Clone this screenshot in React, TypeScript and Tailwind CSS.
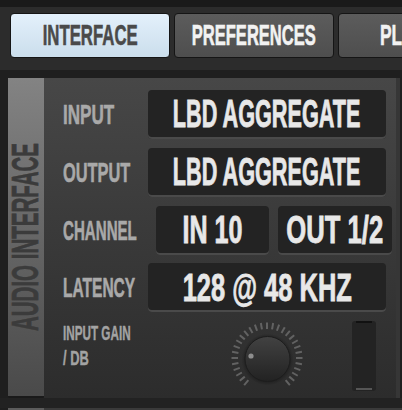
import React from "react";

function Tab({ label, active, scale }: { label: string; active?: boolean; scale: string }) {
  return (
    <div
      className={
        "h-[45px] w-[160px] shrink-0 rounded-[4px] border border-[#151515] flex items-center justify-center " +
        (active
          ? "bg-gradient-to-b from-[#e3f0fb] to-[#cbdeec] text-[#4a4a4a]"
          : "bg-gradient-to-b from-[#5c5c5c] to-[#4e4e4e] text-[#f2f2f2]")
      }
    >
      <span className={"inline-block whitespace-nowrap text-[29px] leading-none [-webkit-text-stroke:0.6px_currentColor] " + scale}>{label}</span>
    </div>
  );
}

function Label({ text, scale }: { text: string; scale: string }) {
  return (
    <div className="w-[85px] shrink-0 flex items-center">
      <span className={"inline-block whitespace-nowrap text-[28.5px] leading-none text-[#a9a9a9] origin-left [-webkit-text-stroke:0.6px_currentColor] " + scale}>
        {text}
      </span>
    </div>
  );
}

function Value({ text, w, scale, extra }: { text: string; w: string; scale: string; extra?: string }) {
  return (
    <div
      className={
        "h-full shrink-0 rounded-[4px] bg-[#232323] shadow-[inset_0_-2px_0_#4a4a4a] flex items-center justify-center " +
        w +
        " " +
        (extra || "")
      }
    >
      <span className={"inline-block whitespace-nowrap text-[38px] leading-none text-[#e8e8e8] [-webkit-text-stroke:0.8px_currentColor] " + scale}>{text}</span>
    </div>
  );
}

function Knob() {
  const ticks = [];
  for (let a = -140; a <= 140; a += 10) {
    const r = (a * Math.PI) / 180;
    const sx = Math.sin(r);
    const sy = -Math.cos(r);
    ticks.push(
      <line
        key={a}
        x1={40 + sx * 29}
        y1={40 + sy * 29}
        x2={40 + sx * 35.5}
        y2={40 + sy * 35.5}
        stroke="#626262"
        strokeWidth={2}
      />
    );
  }
  return (
    <svg width="80" height="80" viewBox="0 0 80 80" className="shrink-0 ml-[79px] mt-[6px]">
      <defs>
        <linearGradient id="kb" x1="0" y1="0" x2="0" y2="1">
          <stop offset="0" stopColor="#424242" />
          <stop offset="1" stopColor="#222222" />
        </linearGradient>
        <radialGradient id="ks" cx="0.5" cy="0.5" r="0.5">
          <stop offset="0.8" stopColor="#000" stopOpacity="0.35" />
          <stop offset="1" stopColor="#000" stopOpacity="0" />
        </radialGradient>
      </defs>
      {ticks}
      <circle cx="40.5" cy="41.5" r="26" fill="url(#ks)" />
      <circle cx="40.5" cy="41" r="22.5" fill="url(#kb)" stroke="#1d1d1d" strokeWidth="1" />
      <circle cx="24" cy="38" r="2.6" fill="#8e8e8e" />
    </svg>
  );
}

export default function App() {
  return (
    <div className="w-[402px] h-[410px] overflow-hidden bg-[#1f1f1f] font-['Liberation_Sans',Arial,sans-serif] font-bold flex flex-col">
      <div className="h-[7px] shrink-0 bg-[#1a1a1a]" />
      <div className="h-[63px] shrink-0 bg-[#2c2c2c] flex gap-[4px] pl-[10px] pt-[6px]">
        <Tab label="INTERFACE" active scale="scale-x-[0.578]" />
        <Tab label="PREFERENCES" scale="scale-x-[0.57]" />
        <div className="h-[45px] w-[160px] shrink-0 rounded-[4px] border border-[#151515] bg-gradient-to-b from-[#5c5c5c] to-[#4e4e4e] text-[#f2f2f2] flex items-center pl-[41px]">
          <span className="inline-block whitespace-nowrap text-[29px] leading-none origin-left scale-x-[0.6] [-webkit-text-stroke:0.6px_currentColor]">PLUGINS</span>
        </div>
      </div>
      <div className="h-[8px] shrink-0 bg-[#1f1f1f]" />
      <div className="h-[320px] shrink-0 flex pl-[8px] pr-[2px]">
        <div className="w-[36px] shrink-0 bg-gradient-to-b from-[#838383] to-[#4a4a4a] border-b-2 border-[#1a1a1a] rounded-b-[2px] flex items-center justify-center">
          <span className="inline-block whitespace-nowrap text-[36px] leading-none text-[#3b3b3b] -rotate-90 scale-x-[0.57] [-webkit-text-stroke:0.7px_currentColor]">
            AUDIO INTERFACE
          </span>
        </div>
        <div className="flex-1 bg-gradient-to-b from-[#474747] to-[#2c2c2c] border-r-4 border-[#363636] pl-[19px] pt-[12px] flex flex-col">
          <div className="h-[49px] flex">
            <Label text="INPUT" scale="scale-x-[0.6]" />
            <Value text="LBD AGGREGATE" w="w-[238px]" scale="scale-x-[0.57]" />
          </div>
          <div className="h-[49px] mt-[9px] flex">
            <Label text="OUTPUT" scale="scale-x-[0.575]" />
            <Value text="LBD AGGREGATE" w="w-[238px]" scale="scale-x-[0.57]" />
          </div>
          <div className="h-[50px] mt-[9px] flex">
            <Label text="CHANNEL" scale="scale-x-[0.53]" />
            <Value text="IN 10" w="w-[113px]" scale="scale-x-[0.66]" extra="ml-[8px]" />
            <Value text="OUT 1/2" w="w-[114px]" scale="scale-x-[0.675]" extra="ml-[9px]" />
          </div>
          <div className="h-[49px] mt-[8px] flex">
            <Label text="LATENCY" scale="scale-x-[0.545]" />
            <Value text="128 @ 48 KHZ" w="w-[238px]" scale="scale-x-[0.67]" />
          </div>
          <div className="flex items-start">
            <div className="w-[85px] shrink-0 mt-[9px] flex flex-col text-[19.5px] leading-[25px] text-[#a3a3a3] [-webkit-text-stroke:0.4px_currentColor]">
              <span className="inline-block whitespace-nowrap origin-left scale-x-[0.6]">INPUT GAIN</span>
              <span className="inline-block whitespace-nowrap origin-left scale-x-[0.66]">/ DB</span>
            </div>
            <Knob />
            <div className="ml-[45px] mt-[9px] w-[24px] h-[70px] shrink-0 rounded-[3px] bg-[#232323] flex flex-col items-stretch px-[4px] pb-[1px]">
              <div className="h-[2px] bg-[#111111]" />
              <div className="flex-1" />
              <div className="h-[2px] bg-[#555555]" />
            </div>
          </div>
        </div>
      </div>
      <div className="h-[10px] shrink-0 bg-[#222222]" />
      <div className="h-[2px] shrink-0 flex pl-[8px]">
        <div className="w-[36px] bg-[#5c5c5c]" />
        <div className="flex-1 bg-[#3a3a3a]" />
      </div>
    </div>
  );
}
